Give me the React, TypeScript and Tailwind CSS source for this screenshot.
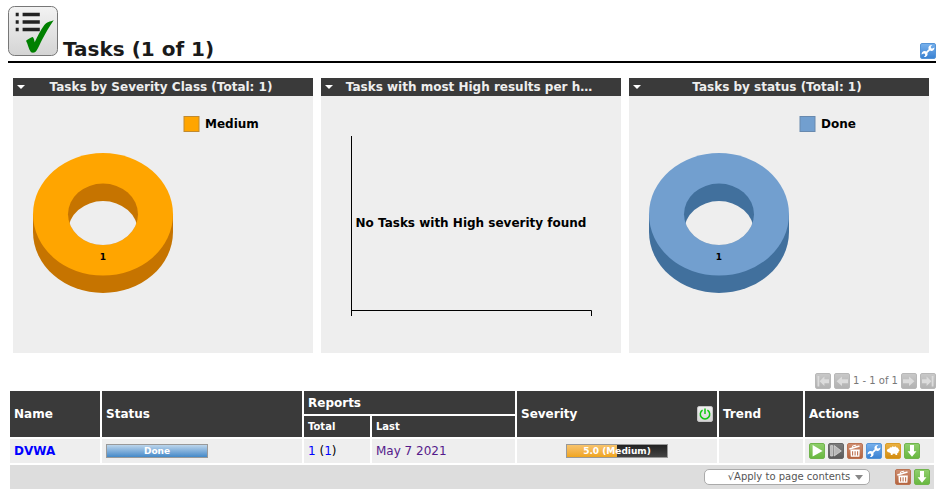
import type { ReactNode } from "react";

type Tone = "green" | "gray" | "dark" | "brown" | "blue" | "amber" | "light";

const tones: Record<Tone, string> = {
  green: "border-[#70b54c] bg-linear-to-b from-[#8fce6c] to-[#69b840]",
  gray: "border-[#b8b8b8] bg-linear-to-b from-[#c8c8c8] to-[#b2b2b2]",
  dark: "border-[#666666] bg-linear-to-b from-[#7c7c7c] to-[#5b5b5b]",
  brown: "border-[#bb7352] bg-linear-to-b from-[#ce8d70] to-[#b5653f]",
  blue: "border-[#5594d6] bg-linear-to-b from-[#76b0ec] to-[#3b83d3]",
  amber: "border-[#d99c25] bg-linear-to-b from-[#eab141] to-[#d38d0e]",
  light: "border-[#c4c4c4] bg-linear-to-b from-[#f0f0f0] to-[#d5d5d5]",
};

function IconButton({ tone, label, disabled, children }: { tone: Tone; label: string; disabled?: boolean; children: ReactNode }) {
  return (
    <button
      type="button"
      aria-label={label}
      disabled={disabled}
      className={`block size-4 shrink-0 overflow-hidden rounded-xs border ${tones[tone]}`}
    >
      <svg viewBox="1 1 14 14" className="block size-full" aria-hidden="true">
        {children}
      </svg>
    </button>
  );
}

const Wrench = () => (
  <g>
    <path d="M5.4 10.6 L10.6 5.6" stroke="#fff" strokeWidth="1.8" />
    <path d="M12.2 2 A3 3 0 1 0 14.4 4.6 L12.4 5.6 L11 5.2 L10.8 3.6 Z" fill="#fff" />
    <path d="M3.8 14 A3 3 0 1 0 1.6 11.4 L3.6 10.4 L5 10.8 L5.2 12.4 Z" fill="#fff" />
  </g>
);

const Trash = () => (
  <g>
    <path d="M2.3 6 L12.5 3" fill="none" stroke="#fff" strokeWidth="1.4" />
    <path d="M5.7 4.8 L5.4 3.1 L8.6 2.2 L9.2 3.8" fill="none" stroke="#fff" />
    <path d="M3.4 6.6 H12.8 L12.4 13.8 H3.8 Z" fill="#fff" />
    <path d="M5.6 8.2 V12.5 M8.1 8.2 V12.5 M10.6 8.2 V12.5" fill="none" stroke="#bd7250" strokeWidth="1.1" />
  </g>
);

const Download = () => <path d="M6 2 H10 V8.3 H12.5 L8 13.8 L3.6 8.3 H6 Z" fill="#fff" />;
const Play = () => <path d="M3.6 2 L13.6 8 L3.6 13.4 Z" fill="#fff" />;
const Resume = () => (
  <g fill="#b8b8b8" stroke="#dedede" strokeWidth="0.7">
    <path d="M2.6 2.6 H4.7 V13 H2.6 Z" />
    <path d="M6.2 2.6 L13.3 8 L6.2 13 Z" />
  </g>
);
const Sheep = () => (
  <path
    d="M1.8 7.3 L2.8 5.9 L4.4 5.6 L5 4.2 L6.4 4.4 L7.6 3.2 L9 3.9 L10.6 3.3 L11.6 4.5 L13 4.7 L13.4 6 L14.6 7.2 L13.6 8.4 L13.3 9.8 L12.2 10.2 V12 H10.4 V10.8 H7.6 V12 H5.8 V10.4 L4.4 9.4 L2.6 8.9 Z"
    fill="#fff"
  />
);
const Arrow = () => <path d="M2 6.3 H8 V3.6 L13.4 8.3 L8 13 V10.3 H2 Z" fill="#dcdcdc" />;
const ArrowBar = () => (
  <g fill="#dcdcdc">
    <path d="M2 6.3 H6.6 V3.6 L11.4 8.3 L6.6 13 V10.3 H2 Z" />
    <path d="M11.7 3 H13.5 V13.6 H11.7 Z" />
  </g>
);
const Mirror = ({ children }: { children: ReactNode }) => <g transform="matrix(-1 0 0 1 16 0)">{children}</g>;

function TasksLogo() {
  return (
    <svg viewBox="0 0 50 50" className="size-[50px] shrink-0" aria-hidden="true">
      <defs>
        <linearGradient id="logo-face" x1="0" y1="0" x2="0" y2="1">
          <stop offset="0" stopColor="#f3f3f3" />
          <stop offset="1" stopColor="#d4d4d4" />
        </linearGradient>
      </defs>
      <rect x="0.5" y="0.5" width="49" height="49" rx="6" fill="url(#logo-face)" stroke="#777" />
      <path d="M7.7 6.7h3v3.5h-3z M7.7 14.2h3v3.5h-3z M7.7 21.7h3v3.5h-3z" fill="#222" />
      <path d="M14.6 6.7h17.2v3.5H14.6z M14.6 14.2h17.2v3.5H14.6z M14.6 21.7h17.2v3.5H14.6z" fill="#222" />
      <path
        d="M18 34.8 C20.2 33.2 22.6 31.6 24.8 31 C26.2 32.6 26.2 34.6 26.7 36.2 C29.4 30.6 32.2 24.6 36 19.4 C38.8 15.8 42 15.6 45.7 14.2 C41.4 20.6 37.6 27 34.2 33.6 C32.2 37.4 31 41 28.6 44.4 C27.2 46.4 25.4 47.2 23 46.2 C20.4 43 20 38.4 18 34.8 Z"
        fill="#008000"
      />
    </svg>
  );
}

function Panel({ title, children }: { title: string; children: ReactNode }) {
  return (
    <section className="min-w-0 bg-[#eeeeee]">
      <div className="flex h-[18px] items-center bg-[#3a3a3a] pr-6 text-[#eeeeee]">
        <button type="button" aria-label={`${title} menu`} className="flex w-5 shrink-0 pl-1">
          <svg viewBox="0 0 8 4" className="h-1 w-2" aria-hidden="true">
            <path d="M0 0H8L4 4Z" fill="#fff" />
          </svg>
        </button>
        <h2 className="flex-1 truncate text-center text-xs font-bold">{title}</h2>
      </div>
      {children}
    </section>
  );
}

function Donut({ id, label, face, side, edge }: { id: string; label: string; face: string; side: string; edge: string }) {
  return (
    <svg viewBox="0 0 300 257" className="block w-full font-bold" role="img" aria-label={`${label}: 1`}>
      <defs>
        <clipPath id={id}>
          <ellipse cx="90" cy="118.3" rx="35" ry="30.7" />
        </clipPath>
      </defs>
      <path d="M20 118.3 V135.7 A70 61.3 0 0 0 160 135.7 V118.3 Z" fill={side} />
      <ellipse cx="90" cy="118.3" rx="70" ry="61.3" fill={face} />
      <ellipse cx="90" cy="118.3" rx="35" ry="30.7" fill={side} />
      <ellipse cx="90" cy="135.8" rx="35" ry="30.7" fill="#eeeeee" clipPath={`url(#${id})`} />
      <text x="90" y="164" textAnchor="middle" fontSize="9">1</text>
      <rect x="171" y="20.5" width="15" height="15" fill={face} stroke={edge} />
      <text x="192" y="32" fontSize="12">{label}</text>
    </svg>
  );
}

const headCell = "bg-[#3a3a3a] px-1 text-left font-bold text-white";
const bodyCell = "h-6 bg-[#eeeeee] px-1";

export default function App() {
  return (
    <main className="pt-1.5 pr-[5px] pl-2 font-['DejaVu_Sans',sans-serif] text-xs text-black">
      <header className="flex items-end gap-[5px] border-b-2 border-black pb-[5px]">
        <TasksLogo />
        <h1 className="flex-1 text-xl leading-[14px] font-bold text-[#1a1a1a]">Tasks (1 of 1)</h1>
        <div className="-mb-[3px]">
          <IconButton tone="blue" label="Edit dashboard"><Wrench /></IconButton>
        </div>
      </header>

      <div className="mt-[15px] grid grid-cols-3 gap-2 pr-[7px] pl-[5px]">
        <Panel title="Tasks by Severity Class (Total: 1)">
          <Donut id="hole-severity" label="Medium" face="#ffa500" side="#c67400" edge="#c08a30" />
        </Panel>
        <Panel title="Tasks with most High results per h…">
          <svg viewBox="0 0 300 257" className="block w-full font-bold" role="img" aria-label="Tasks with most High results">
            <path d="M30.5 40 V220 M30.5 214.5 H270.5 V220" fill="none" stroke="#000" />
            <text x="150" y="131" textAnchor="middle" fontSize="12">No Tasks with High severity found</text>
          </svg>
        </Panel>
        <Panel title="Tasks by status (Total: 1)">
          <Donut id="hole-status" label="Done" face="#729fcf" side="#41709d" edge="#6889ae" />
        </Panel>
      </div>

      <nav aria-label="Pages" className="mt-5 flex h-4 items-center justify-end gap-[3px] text-[10px] text-[#787878]">
        <IconButton tone="gray" label="First page" disabled><Mirror><ArrowBar /></Mirror></IconButton>
        <IconButton tone="gray" label="Previous page" disabled><Mirror><Arrow /></Mirror></IconButton>
        <span>1 - 1 of 1</span>
        <IconButton tone="gray" label="Next page" disabled><Arrow /></IconButton>
        <IconButton tone="gray" label="Last page" disabled><ArrowBar /></IconButton>
      </nav>

      <table className="w-full table-fixed border-separate border-spacing-[2px]">
        <colgroup>
          <col className="w-[90px]" />
          <col className="w-[200px]" />
          <col className="w-[66px]" />
          <col />
          <col className="w-[200px]" />
          <col className="w-[84px]" />
          <col className="w-[129px]" />
        </colgroup>
        <thead>
          <tr>
            <th rowSpan={2} className={headCell}>Name</th>
            <th rowSpan={2} className={headCell}>Status</th>
            <th colSpan={2} className={`h-[23px] ${headCell}`}>Reports</th>
            <th rowSpan={2} className={headCell}>
              <div className="flex items-center justify-between">
                Severity
                <IconButton tone="light" label="Toggle severity overrides">
                  <path d="M5.6 4.2 A4.7 4.7 0 1 0 10.4 4.2 M8 2.6 V8" fill="none" stroke="#11c811" strokeWidth="1.5" />
                </IconButton>
              </div>
            </th>
            <th rowSpan={2} className={headCell}>Trend</th>
            <th rowSpan={2} className={headCell}>Actions</th>
          </tr>
          <tr className="text-[10px]">
            <th className={`h-[21px] ${headCell}`}>Total</th>
            <th className={`h-[21px] ${headCell}`}>Last</th>
          </tr>
        </thead>
        <tbody>
          <tr>
            <td className={bodyCell}><a href="#dvwa" className="font-bold text-[#0000ff]">DVWA</a></td>
            <td className={bodyCell}>
              <div className="h-3.5 w-[102px] border border-[#999999] bg-linear-to-b from-[#bcd5eb] to-[#4389c8] text-center text-[9px] leading-3 font-bold text-white">
                Done
              </div>
            </td>
            <td className={bodyCell}>
              <a href="#reports" className="text-[#0000ff]">1</a> (<a href="#finished" className="text-[#0000ff]">1</a>)
            </td>
            <td className={bodyCell}><a href="#last" className="text-[#551a8b]">May 7 2021</a></td>
            <td className={bodyCell}>
              <div className="mx-auto grid h-3.5 w-[102px] border border-[#999999] bg-linear-to-b from-[#222222] to-[#444444] text-center text-[9px] leading-3 font-bold text-white">
                <div className="col-start-1 row-start-1 w-1/2 bg-linear-to-b from-[#f7c36b] to-[#f0a519]" />
                <span className="col-start-1 row-start-1">5.0 (Medium)</span>
              </div>
            </td>
            <td className={bodyCell} />
            <td className={bodyCell}>
              <div className="flex gap-[3px]">
                <IconButton tone="green" label="Start"><Play /></IconButton>
                <IconButton tone="dark" label="Resume" disabled><Resume /></IconButton>
                <IconButton tone="brown" label="Move to trashcan"><Trash /></IconButton>
                <IconButton tone="blue" label="Edit"><Wrench /></IconButton>
                <IconButton tone="amber" label="Clone"><Sheep /></IconButton>
                <IconButton tone="green" label="Export"><Download /></IconButton>
              </div>
            </td>
          </tr>
        </tbody>
        <tfoot>
          <tr>
            <td colSpan={7} className="h-6 bg-[#dddddd] px-1">
              <div className="flex items-start justify-end gap-[3px]">
                <div className="relative mr-[22px]">
                  <select
                    aria-label="Apply bulk action to"
                    className="block h-4 w-[166px] appearance-none rounded-[5px] border border-[#aaaaaa] bg-white pr-4 pl-5 text-[10px] leading-[14px] text-[#555555] [text-align-last:center]"
                  >
                    <option>√Apply to page contents</option>
                  </select>
                  <svg viewBox="0 0 8 5" className="pointer-events-none absolute top-1.5 right-[7px] h-[5px] w-2" aria-hidden="true">
                    <path d="M0 0H8L4 5Z" fill="#888" />
                  </svg>
                </div>
                <IconButton tone="brown" label="Move page contents to trashcan"><Trash /></IconButton>
                <IconButton tone="green" label="Export page contents"><Download /></IconButton>
              </div>
            </td>
          </tr>
        </tfoot>
      </table>
    </main>
  );
}
